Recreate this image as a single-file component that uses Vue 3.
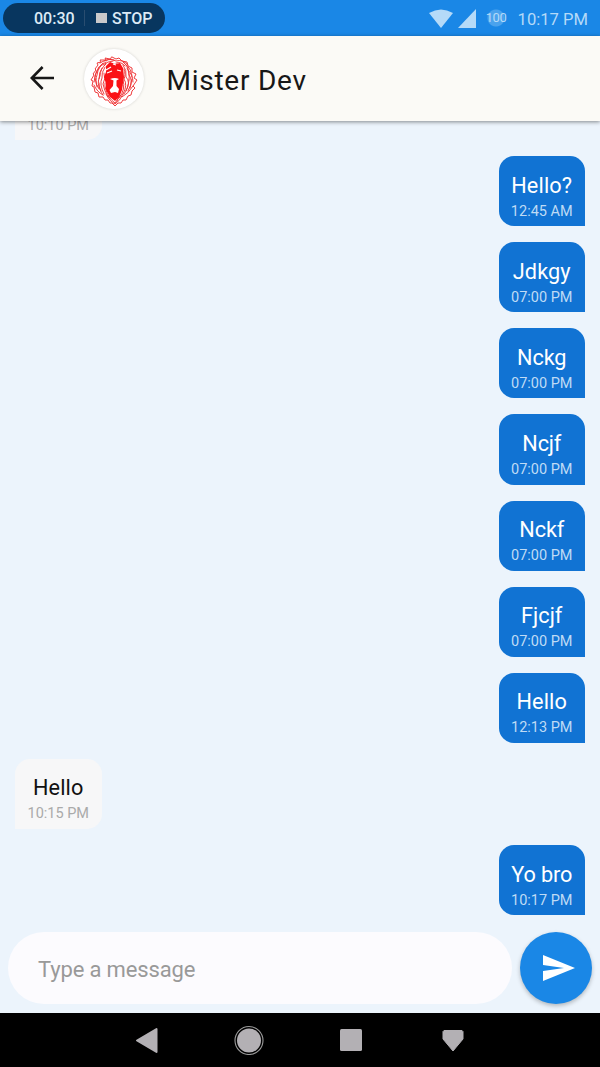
<script setup>
const messages = [
  { text: '', time: '10:10 PM', mine: false, ls: 0 },
  { text: 'Hello?', time: '12:45 AM', mine: true, ls: 0.15 },
  { text: 'Jdkgy', time: '07:00 PM', mine: true, ls: 0.1 },
  { text: 'Nckg', time: '07:00 PM', mine: true, ls: -0.1 },
  { text: 'Ncjf', time: '07:00 PM', mine: true, ls: -0.2 },
  { text: 'Nckf', time: '07:00 PM', mine: true, ls: -0.1 },
  { text: 'Fjcjf', time: '07:00 PM', mine: true, ls: 0 },
  { text: 'Hello', time: '12:13 PM', mine: true, ls: 0.1 },
  { text: 'Hello', time: '10:15 PM', mine: false, ls: 0.1 },
  { text: 'Yo bro', time: '10:17 PM', mine: true, ls: -0.1 },
]
</script>

<template>
  <div class="screen">
    <div class="status">
      <div class="recorder">
        <span class="elapsed">00:30</span>
        <i class="divider"></i>
        <i class="stop-icon"></i>
        <span class="stop">STOP</span>
      </div>
      <svg class="wifi" width="24" height="19" viewBox="0 0 24 19"><path d="M0 4Q12-3 24 4L12 19Z" fill="#b5daf8" /></svg>
      <svg class="signal" width="18" height="19" viewBox="0 0 18 19"><path d="M18 0V19H0Z" fill="#b5daf8" /></svg>
      <span class="battery">100</span>
      <span class="clock">10:17 PM</span>
    </div>

    <header class="bar">
      <svg class="back" width="24" height="24" viewBox="0 0 24 24" fill="none" stroke="#171717" stroke-width="2.6"><path d="M24 12H2M12.6 1L1.8 12L12.6 23" /></svg>
      <div class="avatar">
        <svg width="48" height="52" viewBox="0 0 48 52">
          <g fill="none" stroke="#ee3436" stroke-width="0.95" stroke-linecap="round" stroke-linejoin="round">
            <path d="M20 4L15 3L16 5L10 5L11 7L7 8L8 10L5 14L6 15L3 19L4 20L1 25L3 26L2 31L4 32L5 37L8 38L9 42L13 42L15 45L18 45L20 48L22 48L25 51L28 48L31 48L33 45L36 45L38 41L41 40L42 36L45 33L43 31L47 25L44 23L46 19L42 17L42 13L38 11L37 7L32 6L29 3L26 4L22 2Z" />
            <path d="M16 7Q8 11 7 20Q5 25 7 32M16 9Q10 14 10 21Q6 28 11 36M15 12Q11 18 12 23Q9 29 14 39M14 18Q16 24 13 29Q14 35 18 42M13 8Q6 14 5 22M9 12Q4 20 4 27M9 28Q9 35 13 40M5 23Q6 30 9 34M15 28Q14 34 20 43M4 30Q7 37 13 40M12 13Q9 17 9 24" />
            <path d="M33 7Q39 11 39 20Q43 25 40 33M33 10Q37 15 36 22Q41 27 36 36M34 14Q36 20 34 24Q38 30 33 39M35 9Q42 14 42 22M38 15Q43 20 43 27M39 25Q38 34 34 39M42 24Q41 31 38 36M33 25Q36 34 29 43M32 30Q31 37 27 46M43 31Q38 39 32 42M37 13Q40 18 39 25" />
            <path d="M10 8Q19 2 26 6Q33 4 38 10M13 10Q18 6 23 6M26 8Q31 6 35 11M16 39Q20 47 25 49Q30 46 33 39M18 41Q22 46 25 48Q28 44 31 40M14 6Q20 3 24 5" />
          </g>
          <path d="M16 11L20 7L25 9L30 8L33 13L34 22L33 28L32 35L29 42L25 46L20 42L16 35L16 29L14 22L16 17Z" fill="#fa1216" />
          <path d="M16 15L21 12M17 18L22 16M27 15L31 16M23 9L26 10" stroke="#fff" stroke-width="1.2" fill="none" />
          <path d="M20 24Q25 22 29 24L26.5 25.5L26.5 31L29 34L28 38L25 37L21 38L19.5 35L23 31L23.5 25.5Z" fill="#fff" />
        </svg>
      </div>
      <h1>Mister Dev</h1>
    </header>

    <main class="chat">
      <div v-for="(m, i) in messages" :key="i" class="bubble" :class="m.mine ? 'mine' : 'theirs'">
        <span class="text" :style="{ letterSpacing: m.ls + 'px' }">{{ m.text }}</span>
        <span class="time">{{ m.time }}</span>
      </div>
    </main>

    <div class="composer">
      <div class="input"><span>Type a message</span></div>
      <div class="send">
        <svg width="32" height="28" viewBox="0 0 32 28"><path d="M0 1L32 14L0 27V17L21 14L0 11Z" fill="#fff" /></svg>
      </div>
    </div>

    <nav class="nav">
      <svg width="24" height="28" viewBox="0 0 24 28"><path d="M21.5 3V26L2 14.5Z" fill="#b3b0b4" stroke="#b3b0b4" stroke-width="2" stroke-linejoin="round" /></svg>
      <svg width="30" height="30" viewBox="0 0 30 30"><circle cx="15" cy="15.5" r="12" fill="#b3b0b4" /><circle cx="15" cy="15.5" r="14" fill="none" stroke="#9b9b9b" stroke-width="1.1" /></svg>
      <svg width="22" height="22" viewBox="0 0 22 22"><rect width="22" height="22" rx="1.5" fill="#b3b0b4" /></svg>
      <svg width="22" height="23" viewBox="0 0 22 23"><path d="M2 1.5H20L21 2.5V10L11 22L1 10V2.5Z" fill="#b3b0b4" stroke="#b3b0b4" stroke-width="1" stroke-linejoin="round" /></svg>
    </nav>
  </div>
</template>

<style>
body { margin: 0; }
</style>

<style scoped>
.screen { width: 600px; height: 1067px; display: flex; flex-direction: column; overflow: hidden; background: #ecf4fc; font-family: Roboto, "Liberation Sans", sans-serif; }
.status { height: 36px; flex: none; box-sizing: border-box; display: flex; align-items: center; background: #1a87e6; color: #b5daf8; padding: 0 12px 0 3px; }
.recorder { width: 162px; height: 30px; box-sizing: border-box; border-radius: 15px; background: #08365f; color: #dceaf6; display: flex; align-items: center; padding-left: 31px; font-size: 16px; font-weight: 500; line-height: 30px; }
.recorder span { padding-top: 1px; }
.elapsed { width: 42px; }
.divider { width: 1px; height: 16px; margin-left: 8px; background: #294d70; }
.stop-icon { width: 11px; height: 10px; margin-left: 11px; background: #c9c9cb; }
.stop { margin-left: 5px; letter-spacing: 0; }
.wifi { margin-left: 264px; }
.signal { margin-left: 5px; }
.battery { margin-left: 6px; width: 28px; height: 20px; text-align: center; font-size: 13px; line-height: 20px; letter-spacing: -.5px; background: radial-gradient(circle, #4aa2ed 0 8px, transparent 9px); }
.clock { margin-left: auto; font-size: 16.6px; padding-top: 2px; white-space: nowrap; }
.bar { height: 85px; flex: none; position: relative; z-index: 1; display: flex; align-items: center; background: #fbfaf6; box-shadow: 0 1px 4px rgba(0, 0, 0, .45); }
.back { margin: 0 0 1px 30px; }
.avatar { width: 60px; height: 60px; margin-left: 30px; border-radius: 50%; background: #fff; box-shadow: 0 0 3px rgba(0, 0, 0, .16); display: flex; align-items: center; justify-content: center; }
.avatar svg { margin-top: 4px; }
h1 { margin: 4px 0 0 22.5px; font-size: 28px; font-weight: 400; letter-spacing: .75px; line-height: 36px; color: #171717; }
.chat { flex: 1; min-height: 0; overflow: hidden; display: flex; flex-direction: column; justify-content: flex-end; gap: 16px; padding: 0 15px 17px; }
.bubble { flex: none; width: 86.5px; height: 70.1px; box-sizing: border-box; padding-top: 16.6px; display: flex; flex-direction: column; align-items: center; }
.mine { align-self: flex-end; background: #1173d3; color: #fff; border-radius: 15px 15px 0 15px; }
.theirs { align-self: flex-start; background: #f7f7f8; color: #111; border-radius: 15px 15px 15px 0; }
.text { height: 26px; font-size: 21.7px; line-height: 26px; }
.time { margin-top: 5px; font-size: 14.5px; line-height: 16px; color: #bfdbf5; white-space: nowrap; }
.theirs .time { color: #aaa; }
.composer { height: 81px; flex: none; display: flex; padding: 0 8px; align-items: flex-start; }
.input { width: 504px; height: 72px; border-radius: 36px; background: #fcfbfe; color: #999; font-size: 22px; line-height: 75px; letter-spacing: -.15px; }
.input span { margin-left: 30px; }
.send { width: 72px; height: 72px; margin-left: 8px; border-radius: 50%; background: #1a87e6; box-shadow: 0 2px 4px rgba(0, 0, 0, .25); display: flex; align-items: center; justify-content: center; }
.send svg { margin-left: 6px; }
.nav { height: 54px; flex: none; display: flex; align-items: center; background: #000; padding-left: 135px; }
.nav svg:nth-child(2) { margin-left: 75px; }
.nav svg:nth-child(3) { margin-left: 76px; }
.nav svg:nth-child(4) { margin-left: 80px; }
</style>
